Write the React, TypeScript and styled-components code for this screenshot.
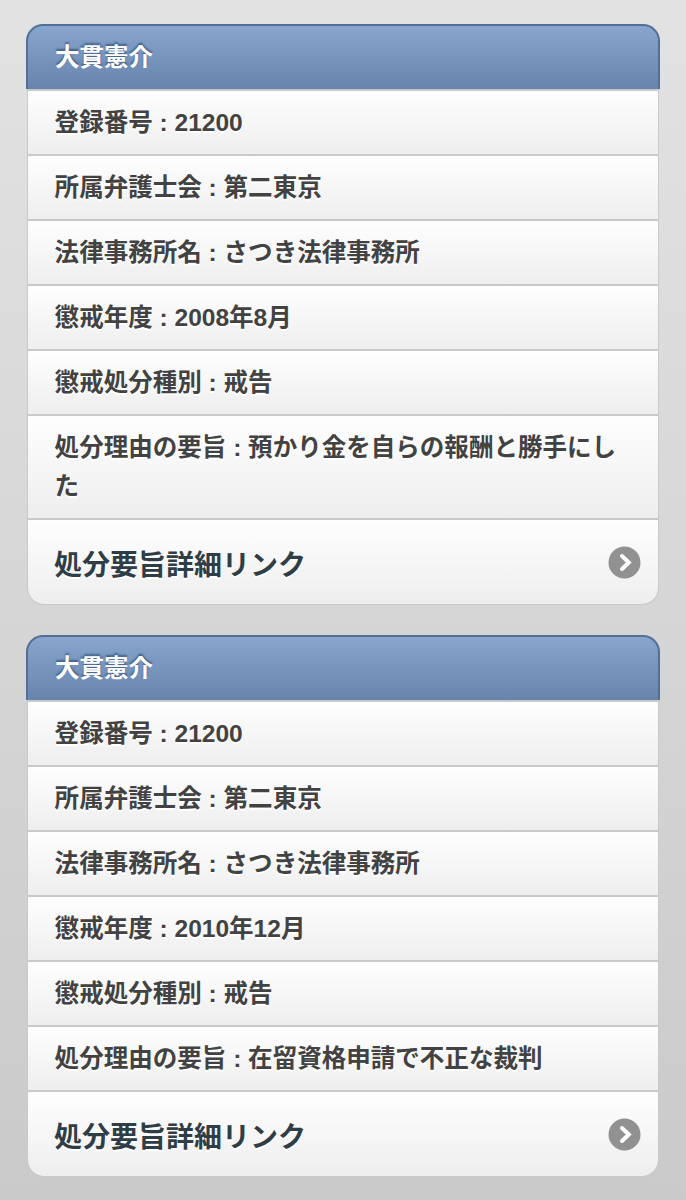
import React from 'react';
import styled, { createGlobalStyle } from 'styled-components';

const Global = createGlobalStyle`
  html { background: #cbcbcb; }
  body {
    margin: 0;
    font-family: "Liberation Sans", "Noto Sans CJK JP", sans-serif;
    color: #424242;
  }
  * { box-sizing: border-box; }
`;

const Page = styled.main`
  display: flex;
  flex-direction: column;
  gap: 30px;
  min-height: 1200px;
  padding: 24px 26px 0;
  background: linear-gradient(#e2e2e2, #cacaca);
`;

const Card = styled.ul`
  list-style: none;
  margin: 0;
  padding: 0;
`;

const Heading = styled.li`
  height: 65px;
  padding: 0 27px;
  border: 2px solid #526f95;
  border-bottom: 0;
  border-radius: 17px 17px 0 0;
  background: linear-gradient(#87a5cd, #6684ac);
  color: #fff;
  font-size: 24.5px;
  font-weight: bold;
  line-height: 64px;
  text-shadow: 0 -2px 2px #3e5f88;
`;

const Row = styled.li<{ $tall?: boolean }>`
  height: ${p => (p.$tall ? 104 : 65)}px;
  margin: 0 1px;
  padding: 12px 26px 0 26.6px;
  border: 1px solid #c9c9c9;
  border-width: 2px 1px 0;
  background: linear-gradient(#fefefe, #eee) padding-box;
  font-size: 24.54px;
  font-weight: bold;
  line-height: 39px;
  text-shadow: 0 2px 0 #fff;
`;

const LinkRow = styled.li`
  display: flex;
  align-items: center;
  justify-content: space-between;
  height: 87px;
  margin: 0 1px;
  padding: 1px 17px 0 26px;
  border: 1px solid #c9c9c9;
  border-top-width: 2px;
  border-radius: 0 0 17px 17px;
  background: linear-gradient(#fefefe, #eee) padding-box;
  color: #2f3e46;
  font-size: 28px;
  font-weight: bold;
  text-shadow: 0 2px 0 #fff;
`;

function Arrow() {
  return (
    <svg width="33" height="33" viewBox="0 0 33 33">
      <circle cx="16.5" cy="16.5" r="16" fill="#919191" />
      <path d="M14 10l6.8 6.5-6.8 6.5" fill="none" stroke="#fff" strokeWidth="4" strokeLinecap="round" />
    </svg>
  );
}

const records = [
  { year: '2008年8月', reason: '預かり金を自らの報酬と勝手にした', tall: true },
  { year: '2010年12月', reason: '在留資格申請で不正な裁判', tall: false },
];

export default function App() {
  return (
    <Page>
      <Global />
      {records.map(r => (
        <Card key={r.year}>
          <Heading>大貫憲介</Heading>
          <Row>登録番号 : 21200</Row>
          <Row>所属弁護士会 : 第二東京</Row>
          <Row>法律事務所名 : さつき法律事務所</Row>
          <Row>{`懲戒年度 : ${r.year}`}</Row>
          <Row>懲戒処分種別 : 戒告</Row>
          <Row $tall={r.tall}>{`処分理由の要旨 : ${r.reason}`}</Row>
          <LinkRow>処分要旨詳細リンク<Arrow /></LinkRow>
        </Card>
      ))}
    </Page>
  );
}
